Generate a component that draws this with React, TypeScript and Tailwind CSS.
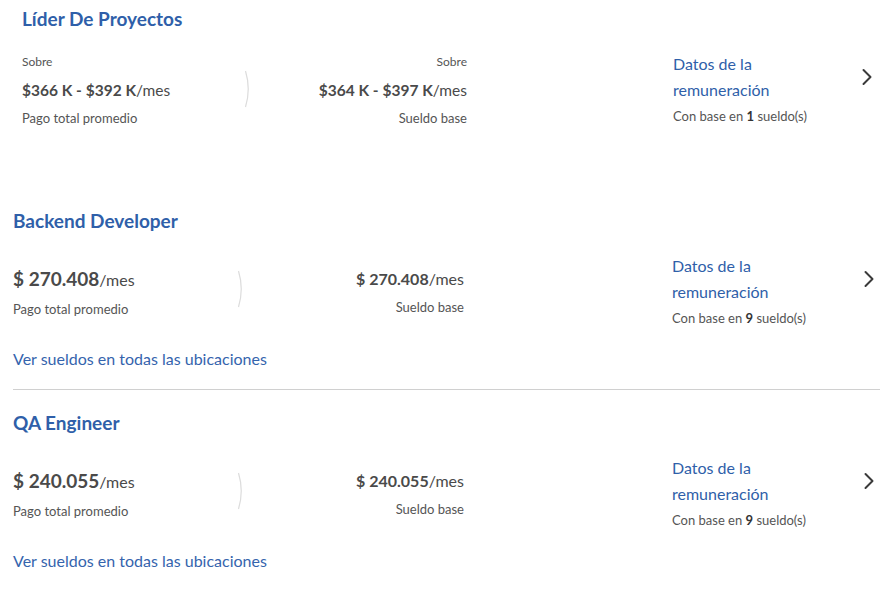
const font = { fontFamily: "Lato, 'Open Sans', sans-serif" };

const Divider = ({ className }: { className: string }) => (
	<svg width="8" height="38" viewBox="0 0 8 38" className={className}>
		<path d="M1.5 1 Q7 19 1.5 37" fill="none" stroke="#dcdcdc" strokeWidth="1.2" />
	</svg>
);

const Chevron = () => (
	<svg width="12" height="18" viewBox="0 0 12 18" className="mt-[17px] shrink-0">
		<path d="M2.5 2 L9.5 9 L2.5 16" fill="none" stroke="#3a3a3a" strokeWidth="2" strokeLinecap="round" strokeLinejoin="round" />
	</svg>
);

const Datos = ({ count }: { count: number }) => (
	<div className="flex flex-col">
		<a className="text-[16px] leading-[26px] text-[#2f5fa9]">Datos de la</a>
		<a className="text-[16px] leading-[26px] text-[#2f5fa9]">remuneración</a>
		<p className="mt-[5px] text-[13px] leading-4 text-[#555]">
			Con base en <span className="font-bold text-[#333]">{count}</span> sueldo(s)
		</p>
	</div>
);

const LiderCard = () => (
	<div className="pl-[22px] pr-[7px] pt-[6px]">
		<h2 className="text-[19px] font-bold leading-[26px] text-[#2f5fa9]">Líder De Proyectos</h2>
		<div className="mt-[19px] flex items-start">
			<div className="w-[222px] pt-[3px]">
				<p className="text-[12px] leading-4 text-[#555]">Sobre</p>
				<p className="mt-[9px] text-[15.5px] leading-[22px] text-[#4a4a4a]">
					<span className="font-bold">$366 K - $392 K</span>/mes
				</p>
				<p className="mt-[9px] text-[13px] leading-4 text-[#555]">Pago total promedio</p>
			</div>
			<Divider className="mt-[19px] shrink-0" />
			<div className="w-[215px] pt-[3px] text-right">
				<p className="text-[12px] leading-4 text-[#555]">Sobre</p>
				<p className="mt-[9px] text-[15.5px] leading-[22px] text-[#4a4a4a]">
					<span className="font-bold">$364 K - $397 K</span>/mes
				</p>
				<p className="mt-[9px] text-[13px] leading-4 text-[#555]">Sueldo base</p>
			</div>
			<div className="ml-[206px] flex-1">
				<Datos count={1} />
			</div>
			<Chevron />
		</div>
	</div>
);

type Job = { title: string; amount: string; count: number };

const JobCard = ({ job }: { job: Job }) => (
	<div className="pl-[13px] pr-[5px]">
		<h2 className="text-[19px] font-bold leading-[26px] text-[#2f5fa9]">{job.title}</h2>
		<div className="mt-[19px] flex items-start">
			<div className="w-[224px] pt-[14px]">
				<p className="leading-6 text-[#4a4a4a]">
					<span className="text-[19px] font-bold">{job.amount}</span>
					<span className="text-[16px]">/mes</span>
				</p>
				<p className="mt-[9px] text-[13px] leading-4 text-[#555]">Pago total promedio</p>
			</div>
			<Divider className="mt-[17px] shrink-0" />
			<div className="w-[219px] pt-[14px] text-right">
				<p className="text-[16px] leading-6 text-[#4a4a4a]">
					<span className="font-bold">{job.amount}</span>/mes
				</p>
				<p className="mt-[8px] text-[13px] leading-4 text-[#555]">Sueldo base</p>
			</div>
			<div className="ml-[208px] flex-1">
				<Datos count={job.count} />
			</div>
			<Chevron />
		</div>
		<a className="mt-[23px] block text-[16px] leading-5 text-[#3564ad]">
			Ver sueldos en todas las ubicaciones
		</a>
	</div>
);

const jobs: Job[] = [
	{ title: "Backend Developer", amount: "$ 270.408", count: 9 },
	{ title: "QA Engineer", amount: "$ 240.055", count: 9 },
];

export default function App() {
	return (
		<div className="h-[592px] w-[880px] overflow-hidden bg-white" style={font}>
			<LiderCard />
			<div className="mt-[82px]">
				<JobCard job={jobs[0]} />
			</div>
			<div className="ml-[13px] mt-[20px] border-t border-[#d0d0d0]" />
			<div className="pt-[20px]">
				<JobCard job={jobs[1]} />
			</div>
		</div>
	);
}
